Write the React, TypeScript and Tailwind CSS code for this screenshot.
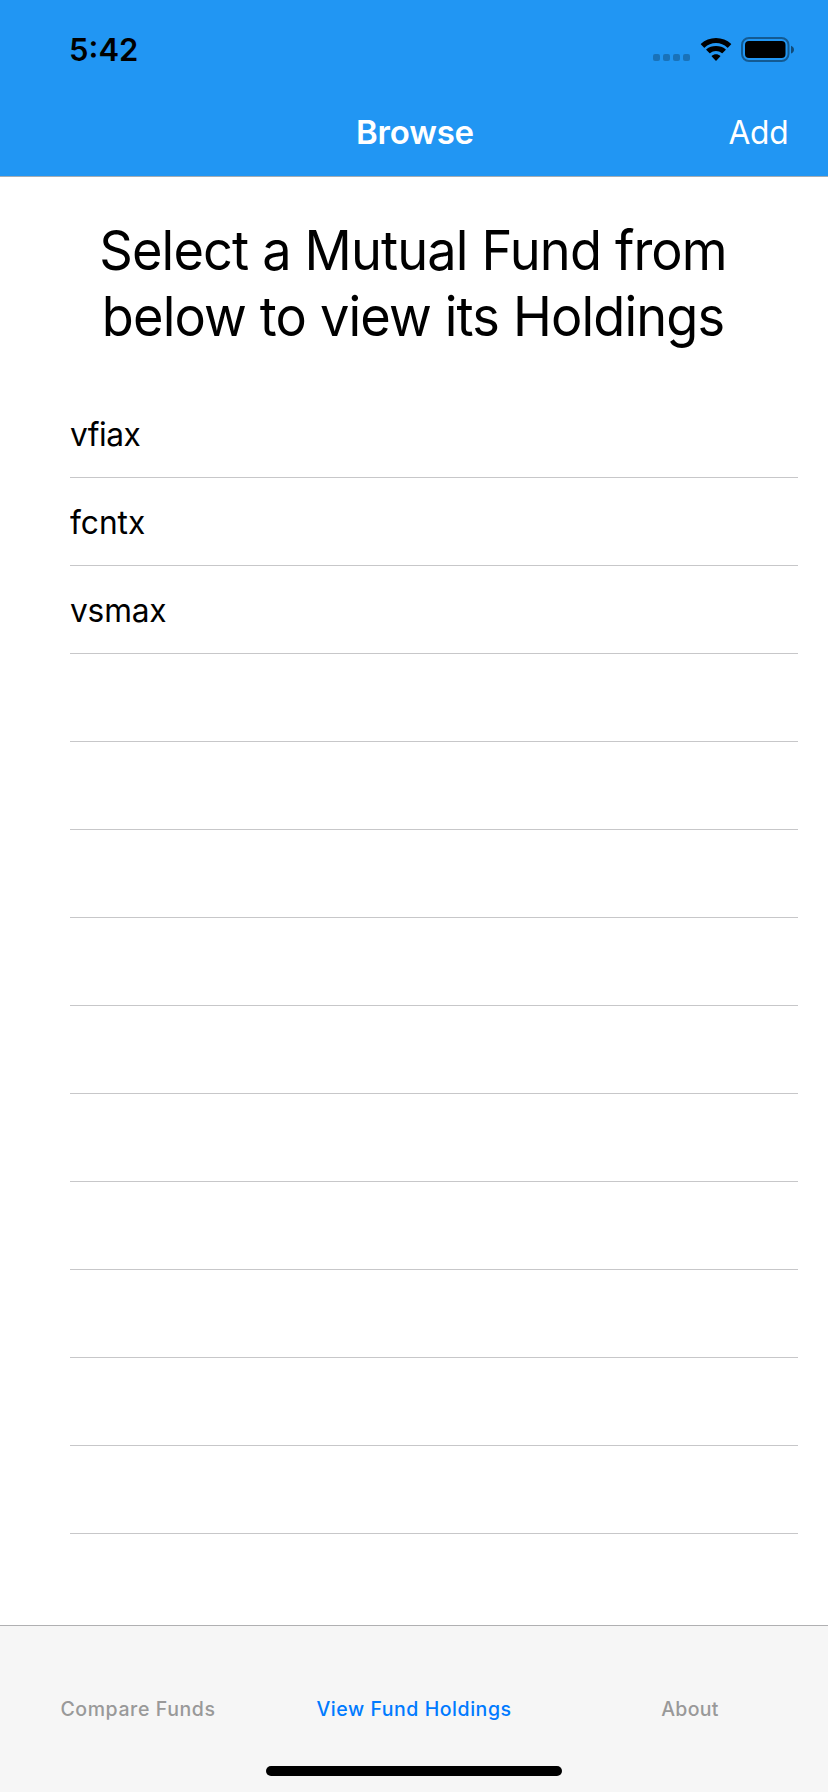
import React from "react";

const FUNDS = ["vfiax", "fcntx", "vsmax"];
const ROW_COUNT = 13;

const TRACKING: Record<string, string> = {
  vfiax: "tracking-[-0.5px]",
  fcntx: "tracking-[0px]",
  vsmax: "tracking-[-0.2px]",
};

function SignalDots() {
  return (
    <svg width="38" height="8" viewBox="0 0 38 8" className="mb-[1px]" fill="#000" fillOpacity="0.24">
      <rect x="0" y="0" width="7" height="7" rx="2" />
      <rect x="10" y="0" width="7" height="7" rx="2" />
      <rect x="20" y="0" width="7" height="7" rx="2" />
      <rect x="30" y="0" width="7" height="7" rx="2" />
    </svg>
  );
}

function WifiIcon() {
  return (
    <svg width="32" height="24" viewBox="0 0 32 24" fill="#000">
      <path d="M16 4.9c4.3 0 8.3 1.7 11.2 4.5.3.3.6.3.9 0l2.9-2.8c.3-.3.3-.6 0-.9C27.1 2.2 21.8.1 16 .1S4.9 2.2 1 5.700c-.3.3-.3.6 0 .9l2.900 2.800c.3.3.6.3.9 0C7.700 6.600 11.700 4.900 16 4.900z" />
      <path d="M16 12.900c2.200 0 4.200.8 5.700 2.100.3.3.6.3.9 0l3-2.900c.3-.3.3-.6 0-.9C23.100 8.900 19.700 7.900 16 7.900s-7.100 1-9.600 3.300c-.3.3-.3.6 0 .9l3 2.900c.3.3.6.3.9 0 1.500-1.300 3.500-2.100 5.700-2.100z" />
      <path d="M20.200 18.600c.3-.3.3-.6 0-.8-1.100-.9-2.600-1.500-4.200-1.500s-3.100.6-4.200 1.500c-.3.2-.3.5 0 .8l3.700 3.900c.3.3.7.3 1 0z" />
    </svg>
  );
}

function BatteryIcon() {
  return (
    <svg width="54" height="26" viewBox="0 0 54 26" fill="none">
      <rect x="1" y="1" width="46.500" height="23" rx="7" stroke="#000" strokeOpacity="0.4" strokeWidth="2" />
      <rect x="4" y="4" width="40.500" height="17" rx="4" fill="#000" />
      <path d="M50 8.800c1.900.7 3 2.100 3 3.900s-1.100 3.200-3 3.900z" fill="#000" fillOpacity="0.5" />
    </svg>
  );
}

export default function App() {
  return (
    <div className="flex h-[1792px] w-[828px] flex-col overflow-hidden bg-white font-[Inter,sans-serif] text-black">
      <header className="h-[177px] shrink-0 border-b border-[#a3adb5] bg-[#2196f3]">
        <div className="flex h-[88px] items-center justify-between pt-3 pr-[33px] pl-[69px]">
          <span className="text-[31px] leading-10 font-semibold">5:42</span>
          <div className="flex h-[26px] items-end">
            <SignalDots />
            <div className="ml-[8.500px] pb-[1px]">
              <WifiIcon />
            </div>
            <div className="ml-[9.500px]">
              <BatteryIcon />
            </div>
          </div>
        </div>
        <div className="grid h-[88px] grid-cols-3 items-center text-[33px] leading-10 text-white">
          <span />
          <h1 className="pl-[2px] text-center font-semibold tracking-[-0.2px]">Browse</h1>
          <button className="mr-10 origin-right scale-x-[0.96] justify-self-end tracking-[-0.300px]">Add</button>
        </div>
      </header>

      <main className="flex flex-1 flex-col">
        <h2 className="scale-x-[0.96] pt-10 pr-[2px] text-center text-[54.500px] leading-[66px] tracking-[-0.900px]">
          Select a Mutual Fund from
          <br />
          below to view its Holdings
        </h2>
        <ul className="mt-[41px] mr-[30px] ml-[70px]">
          {Array.from({ length: ROW_COUNT }, (_, i) => (
            <li key={i} className="flex h-[88px] items-center border-b border-[#c7c7c9] text-[33px] leading-10">
              {FUNDS[i] && <span className={`origin-left scale-x-[0.96] ${TRACKING[FUNDS[i]]}`}>{FUNDS[i]}</span>}
            </li>
          ))}
        </ul>
      </main>

      <nav className="flex h-[167px] shrink-0 flex-col items-center justify-between border-t border-[#b0b0b2] bg-[#f6f6f6] pb-4">
        <div className="grid w-full grid-cols-3 pt-[71px] text-center text-[19.500px] leading-6 font-[450] text-[#999]">
          <span className="tracking-[0.600px]">Compare Funds</span>
          <span className="tracking-[0.550px] text-[#007aff]">View Fund Holdings</span>
          <span className="tracking-[0.300px]">About</span>
        </div>
        <div className="h-[10px] w-[296px] rounded-full bg-black" />
      </nav>
    </div>
  );
}
